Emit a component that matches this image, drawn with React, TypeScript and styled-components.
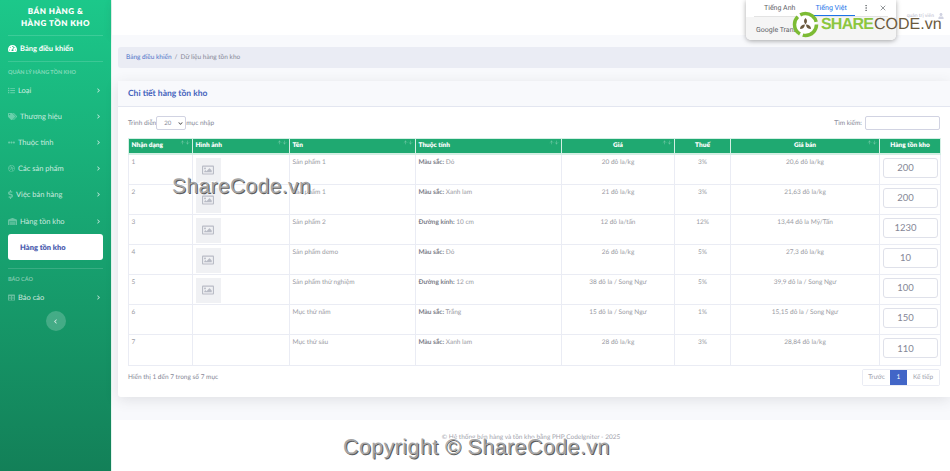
import React from "react";
import styled, { createGlobalStyle } from "styled-components";
import {
  FaTachometerAlt,
  FaList,
  FaTags,
  FaEllipsisH,
  FaDribbble,
  FaDollarSign,
  FaWarehouse,
  FaTable,
  FaChevronRight,
  FaChevronLeft,
  FaChevronDown,
  FaUser,
  FaRegImage,
} from "react-icons/fa";
import { ArrowUp, ArrowDown, EllipsisVertical, X } from "lucide-react";

const GlobalStyle = createGlobalStyle`
  html, body { margin: 0; padding: 0; height: 100%; overflow: hidden; background: #fff; }
  body {
    font-family: "Lato", "Open Sans", "Liberation Sans", sans-serif;
    color: #858796;
    text-rendering: geometricPrecision;
  }
  * { box-sizing: border-box; }
`;

const Page = styled.div`
  position: relative;
  display: flex;
  width: 950px;
  height: 471px;
  overflow: hidden;
`;

const Sidebar = styled.aside`
  width: 112px;
  flex: none;
  padding: 0 8px;
  background: linear-gradient(180deg, #1cc88a 0%, #138058 100%);
  color: rgba(255, 255, 255, 0.8);
  display: flex;
  flex-direction: column;
  border-right: 1px solid #e3f5ee;
`;

const Brand = styled.div`
  height: 35px;
  padding-top: 5px;
  text-align: center;
  color: #fff;
  font-size: 8px;
  font-weight: 800;
  line-height: 12px;
  letter-spacing: 0.5px;
`;

const Divider = styled.hr`
  border: 0;
  border-top: 1px solid rgba(255, 255, 255, 0.15);
  margin: 0;
`;

const DashLink = styled.div`
  height: 25px;
  display: flex;
  align-items: center;
  gap: 3px;
  color: #fff;
  font-size: 7.5px;
  font-weight: 700;
`;

const SideHeading = styled.div`
  font-size: 5.5px;
  font-weight: 700;
  color: rgba(255, 255, 255, 0.45);
  text-transform: uppercase;
  height: 9px;
  margin-top: 6px;
  display: flex;
  align-items: center;
`;

const NavItem = styled.div`
  height: 26.2px;
  display: flex;
  align-items: center;
  gap: 3px;
  font-size: 7.5px;
  color: rgba(255, 255, 255, 0.78);
  svg:first-child {
    color: rgba(255, 255, 255, 0.35);
  }
  svg:last-child {
    margin-left: auto;
    margin-right: 2px;
    color: rgba(255, 255, 255, 0.7);
  }
`;

const DollarIcon = styled(FaDollarSign)`
  width: 5px;
  height: 9px;
`;

const ActiveBox = styled.div`
  height: 26px;
  margin: 0 0 8px;
  padding-left: 12px;
  display: flex;
  align-items: center;
  background: #fff;
  border-radius: 3px;
  color: #4e5fb0;
  font-size: 7.5px;
  font-weight: 800;
`;

const Toggle = styled.div`
  align-self: center;
  width: 20px;
  height: 20px;
  margin-top: 1px;
  border-radius: 50%;
  background: rgba(255, 255, 255, 0.2);
  color: rgba(255, 255, 255, 0.8);
  display: flex;
  align-items: center;
  justify-content: center;
`;

const Main = styled.main`
  flex: 1;
  min-width: 0;
  display: flex;
  flex-direction: column;
`;

const Topbar = styled.header`
  height: 35px;
  flex: none;
  background: #fff;
  box-shadow: 0 2px 8px rgba(58, 59, 69, 0.12);
  display: flex;
  justify-content: flex-end;
  align-items: center;
  gap: 4px;
  padding: 0 6px 3px 0;
  color: #b7b9cc;
  font-size: 5px;
`;

const Content = styled.div`
  height: 385px;
  flex: none;
  background: #f8f9fc;
  padding: 12px 0 0 6px;
`;

const Crumbs = styled.nav`
  height: 21px;
  background: #eaecf4;
  border-radius: 3px 0 0 3px;
  display: flex;
  align-items: center;
  gap: 3px;
  padding-left: 8px;
  font-size: 6.5px;
  color: #858796;
  a {
    color: #4e73c8;
  }
`;

const Card = styled.section`
  margin-top: 13px;
  height: 316px;
  background: #fff;
  border-radius: 3px 0 0 3px;
  box-shadow: 0 3px 14px rgba(58, 59, 69, 0.13);
`;

const CardHead = styled.div`
  height: 26px;
  padding: 0 0 1px 10px;
  display: flex;
  align-items: center;
  background: #f8f9fc;
  border-bottom: 1px solid #e3e6f0;
  color: #4463bd;
  font-size: 8.5px;
  font-weight: 700;
`;

const CardBody = styled.div`
  padding: 9px 10px 0;
`;

const Controls = styled.div`
  height: 14px;
  margin-bottom: 8px;
  display: flex;
  justify-content: space-between;
  align-items: center;
  font-size: 6.5px;
`;

const Label = styled.label`
  display: flex;
  align-items: center;
`;

const LengthBox = styled.span`
  width: 30px;
  height: 14px;
  padding: 0 2px 0 7px;
  display: inline-flex;
  align-items: center;
  justify-content: space-between;
  border: 1px solid #d1d3e2;
  border-radius: 2px;
  font-size: 6px;
  svg {
    color: #555;
  }
`;

const SearchBox = styled.input`
  width: 75px;
  height: 14px;
  margin-left: 3px;
  border: 1px solid #d1d3e2;
  border-radius: 2px;
  background: #fff;
`;

const Table = styled.table`
  width: 812px;
  table-layout: fixed;
  border-collapse: collapse;
  font-size: 6.5px;
`;

const Th = styled.th<{ $center?: boolean }>`
  position: relative;
  height: 15px;
  padding: 0 2.5px;
  background: #1fa971;
  color: #fff;
  font-size: 6.5px;
  font-weight: 800;
  text-align: ${(p) => (p.$center ? "center" : "left")};
  border: 1px solid #d4efe4;
  border-bottom-width: 2px;
`;

const SortMark = styled.span`
  position: absolute;
  top: 1px;
  right: 2px;
  display: flex;
  color: rgba(255, 255, 255, 0.4);
`;

const Td = styled.td<{ $center?: boolean; $tall?: boolean }>`
  height: ${(p) => (p.$tall ? 30.7 : 30)}px;
  padding: 3px 2.5px 1px;
  vertical-align: top;
  line-height: 9px;
  text-align: ${(p) => (p.$center ? "center" : "left")};
  border: 1px solid #eaecf4;
  color: #9a9ba3;
  b {
    font-weight: 700;
    color: #7a7c88;
  }
`;

const Thumb = styled.div`
  width: 25px;
  height: 25px;
  background: #f0f1f4;
  color: #b9bcc6;
  display: flex;
  align-items: center;
  justify-content: center;
`;

const StockInput = styled.input`
  display: block;
  width: 55px;
  height: 20px;
  margin: 0 auto;
  padding: 0 9px 0 0;
  text-align: center;
  border: 1px solid #dfe1ea;
  border-radius: 3px;
  background: #fff;
  font-family: inherit;
  font-size: 9.5px;
  color: #858796;
`;

const TableFoot = styled.div`
  margin-top: 3px;
  display: flex;
  justify-content: space-between;
  align-items: center;
  font-size: 6.5px;
`;

const Pager = styled.div`
  display: flex;
  height: 17px;
  border: 1px solid #eaecf4;
  border-radius: 2px;
`;

const PageLink = styled.span<{ $active?: boolean; $w: number }>`
  width: ${(p) => p.$w}px;
  display: flex;
  align-items: center;
  justify-content: center;
  background: ${(p) => (p.$active ? "#4266c7" : "#fff")};
  color: ${(p) => (p.$active ? "#fff" : "#a0a2ad")};
`;

const Footer = styled.footer`
  flex: 1;
  background: #fff;
  text-align: center;
  padding-top: 14px;
  font-size: 6.5px;
  color: #a2a3ac;
`;

const TranslatePopup = styled.div`
  position: absolute;
  top: 0;
  left: 746px;
  width: 150px;
  height: 40px;
  background: #fff;
  border-radius: 0 0 5px 5px;
  box-shadow: 0 1px 5px rgba(0, 0, 0, 0.35);
  font-family: "Roboto", "Liberation Sans", sans-serif;
  font-size: 7px;
  color: #5f6368;
  overflow: hidden;
`;

const PopupTabs = styled.div`
  height: 17px;
  margin: 0 8px;
  padding: 0 0 1px 10px;
  display: flex;
  align-items: center;
  border-bottom: 1px solid #e3e3e3;
  white-space: nowrap;
`;

const PopupTab = styled.span<{ $on?: boolean }>`
  position: relative;
  color: ${(p) => (p.$on ? "#1a73e8" : "#5f6368")};
  & + & {
    margin-left: 20px;
  }
  &::after {
    content: "";
    display: ${(p) => (p.$on ? "block" : "none")};
    position: absolute;
    left: -7px;
    right: -8px;
    bottom: -4px;
    height: 1px;
    background: #1a73e8;
  }
`;

const PopupIcons = styled.div`
  margin-left: 15px;
  display: flex;
  align-items: center;
  gap: 9px;
`;

const PopupFoot = styled.div`
  height: 23px;
  padding: 3px 0 0 10px;
  display: flex;
  align-items: center;
  background: #f5f5f5;
`;

const Logo = styled.div`
  position: absolute;
  top: 11px;
  left: 792px;
  display: flex;
  align-items: center;
  gap: 2px;
  font-family: "Liberation Sans", sans-serif;
  font-size: 16px;
  line-height: 26px;
`;

const LogoStrong = styled.span`
  color: #8cc63f;
  font-weight: 700;
  letter-spacing: -0.8px;
`;

const LogoLight = styled.span`
  color: #6b5a3e;
  margin-left: -1px;
`;

const Watermark = styled.div<{ $x: number; $y: number; $size: number }>`
  position: absolute;
  left: ${(p) => p.$x}px;
  top: ${(p) => p.$y}px;
  font-family: "Liberation Sans", sans-serif;
  font-size: ${(p) => p.$size}px;
  line-height: 1;
  white-space: nowrap;
  color: #a5a5a5;
  text-shadow: 1px 1px 0 #5c5c5c, -1px -1px 0 #fff;
  letter-spacing: 0.4px;
`;

type Row = {
  id: number;
  img: boolean;
  name: string;
  attr: string;
  val: string;
  price: string;
  tax: string;
  sale: string;
  stock: string;
  tall?: boolean;
};

const rows: Row[] = [
  { id: 1, img: true, name: "Sản phẩm 1", attr: "Màu sắc:", val: "Đỏ", price: "20 đô la/kg", tax: "3%", sale: "20,6 đô la/kg", stock: "200", tall: true },
  { id: 2, img: true, name: "Sản phẩm 1", attr: "Màu sắc:", val: "Xanh lam", price: "21 đô la/kg", tax: "3%", sale: "21,63 đô la/kg", stock: "200" },
  { id: 3, img: true, name: "Sản phẩm 2", attr: "Đường kính:", val: "10 cm", price: "12 đô la/tấn", tax: "12%", sale: "13,44 đô la Mỹ/Tấn", stock: "1230" },
  { id: 4, img: true, name: "Sản phẩm demo", attr: "Màu sắc:", val: "Đỏ", price: "26 đô la/kg", tax: "5%", sale: "27,3 đô la/kg", stock: "10" },
  { id: 5, img: true, name: "Sản phẩm thử nghiệm", attr: "Đường kính:", val: "12 cm", price: "38 đô la / Song Ngư", tax: "5%", sale: "39,9 đô la / Song Ngư", stock: "100" },
  { id: 6, img: false, name: "Mục thứ năm", attr: "Màu sắc:", val: "Trắng", price: "15 đô la / Song Ngư", tax: "1%", sale: "15,15 đô la / Song Ngư", stock: "150", tall: true },
  { id: 7, img: false, name: "Mục thứ sáu", attr: "Màu sắc:", val: "Xanh lam", price: "28 đô la/kg", tax: "3%", sale: "28,84 đô la/kg", stock: "110", tall: true },
];

const columns = [
  { title: "Nhận dạng", width: 64, sort: true },
  { title: "Hình ảnh", width: 97, sort: true },
  { title: "Tên", width: 126, sort: true },
  { title: "Thuộc tính", width: 146, sort: true },
  { title: "Giá", width: 113, sort: true, center: true },
  { title: "Thuế", width: 56, center: true },
  { title: "Giá bán", width: 149, sort: true, center: true },
  { title: "Hàng tồn kho", width: 61, center: true },
];

const navItems = [
  { label: "Loại", icon: FaList, size: 7 },
  { label: "Thương hiệu", icon: FaTags, size: 9 },
  { label: "Thuộc tính", icon: FaEllipsisH, size: 7 },
  { label: "Các sản phẩm", icon: FaDribbble, size: 7 },
  { label: "Việc bán hàng", icon: DollarIcon, size: 9 },
  { label: "Hàng tồn kho", icon: FaWarehouse, size: 9 },
];

const LogoMark = () => (
  <svg width="27" height="27" viewBox="0 0 27 27">
    <circle cx="13.5" cy="13.5" r="11" fill="#fff" stroke="#7cbb34" strokeWidth="3.5" strokeDasharray="20 3" />
    <path d="M13.5 7c2 2 2 4 0 6.500C11.500 11 11.500 9 13.500 7Z" fill="#6b5a3e" />
    <path d="M8 18c0-3 2-4.500 5-4.500C12.500 16.500 11 18 8 18Z" fill="#6b5a3e" />
    <path d="M19 18c-3 0-5-1.500-5-4.500C17 13.500 19 15 19 18Z" fill="#6b5a3e" />
  </svg>
);

export default function App() {
  return (
    <>
      <GlobalStyle />
      <Page>
        <Sidebar>
          <Brand>
            BÁN HÀNG &amp;
            <br />
            HÀNG TỒN KHO
          </Brand>
          <Divider />
          <DashLink>
            <FaTachometerAlt size={9} />
            Bảng điều khiển
          </DashLink>
          <Divider />
          <SideHeading>Quản lý hàng tồn kho</SideHeading>
          {navItems.map(({ label, icon: Icon, size }) => (
            <NavItem key={label}>
              <Icon size={size} />
              {label}
              <FaChevronRight size={5} />
            </NavItem>
          ))}
          <ActiveBox>Hàng tồn kho</ActiveBox>
          <Divider />
          <SideHeading>Báo cáo</SideHeading>
          <NavItem>
            <FaTable size={7} />
            Báo cáo
            <FaChevronRight size={5} />
          </NavItem>
          <Toggle>
            <FaChevronLeft size={5} />
          </Toggle>
        </Sidebar>

        <Main>
          <Topbar>
            quản trị viên
            <FaUser size={6} color="#d1d3e2" />
          </Topbar>
          <Content>
            <Crumbs>
              <a>Bảng điều khiển</a>
              <span>/</span>
              <span>Dữ liệu hàng tồn kho</span>
            </Crumbs>
            <Card>
              <CardHead>Chi tiết hàng tồn kho</CardHead>
              <CardBody>
                <Controls>
                  <Label>
                    Trình diễn
                    <LengthBox>
                      20
                      <FaChevronDown size={5} />
                    </LengthBox>
                    mục nhập
                  </Label>
                  <Label>
                    Tìm kiếm:
                    <SearchBox />
                  </Label>
                </Controls>
                <Table>
                  <colgroup>
                    {columns.map((c) => (
                      <col key={c.title} width={c.width} />
                    ))}
                  </colgroup>
                  <thead>
                    <tr>
                      {columns.map((c) => (
                        <Th key={c.title} $center={c.center}>
                          {c.title}
                          {c.sort && (
                            <SortMark>
                              <ArrowUp size={5} strokeWidth={2.5} />
                              <ArrowDown size={5} strokeWidth={2.5} />
                            </SortMark>
                          )}
                        </Th>
                      ))}
                    </tr>
                  </thead>
                  <tbody>
                    {rows.map((r) => (
                      <tr key={r.id}>
                        <Td $tall={r.tall}>{r.id}</Td>
                        <Td>
                          {r.img && (
                            <Thumb>
                              <FaRegImage size={12} />
                            </Thumb>
                          )}
                        </Td>
                        <Td>{r.name}</Td>
                        <Td>
                          <b>{r.attr}</b> {r.val}
                        </Td>
                        <Td $center>{r.price}</Td>
                        <Td $center>{r.tax}</Td>
                        <Td $center>{r.sale}</Td>
                        <Td>
                          <StockInput readOnly value={r.stock} />
                        </Td>
                      </tr>
                    ))}
                  </tbody>
                </Table>
                <TableFoot>
                  <span>Hiển thị 1 đến 7 trong số 7 mục</span>
                  <Pager>
                    <PageLink $w={27}>Trước</PageLink>
                    <PageLink $active $w={17}>1</PageLink>
                    <PageLink $w={32}>Kế tiếp</PageLink>
                  </Pager>
                </TableFoot>
              </CardBody>
            </Card>
          </Content>
          <Footer>© Hệ thống bán hàng và tồn kho bằng PHP CodeIgniter - 2025</Footer>
        </Main>

        <TranslatePopup>
          <PopupTabs>
            <PopupTab>Tiếng Anh</PopupTab>
            <PopupTab $on>Tiếng Việt</PopupTab>
            <PopupIcons>
              <EllipsisVertical size={8} />
              <X size={8} />
            </PopupIcons>
          </PopupTabs>
          <PopupFoot>Google Trans</PopupFoot>
        </TranslatePopup>

        <Logo>
          <LogoMark />
          <LogoStrong>SHARE</LogoStrong>
          <LogoLight>CODE.vn</LogoLight>
        </Logo>

        <Watermark $x={172} $y={176} $size={21}>ShareCode.vn</Watermark>
        <Watermark $x={343} $y={437} $size={21.5}>Copyright © ShareCode.vn</Watermark>
      </Page>
    </>
  );
}
